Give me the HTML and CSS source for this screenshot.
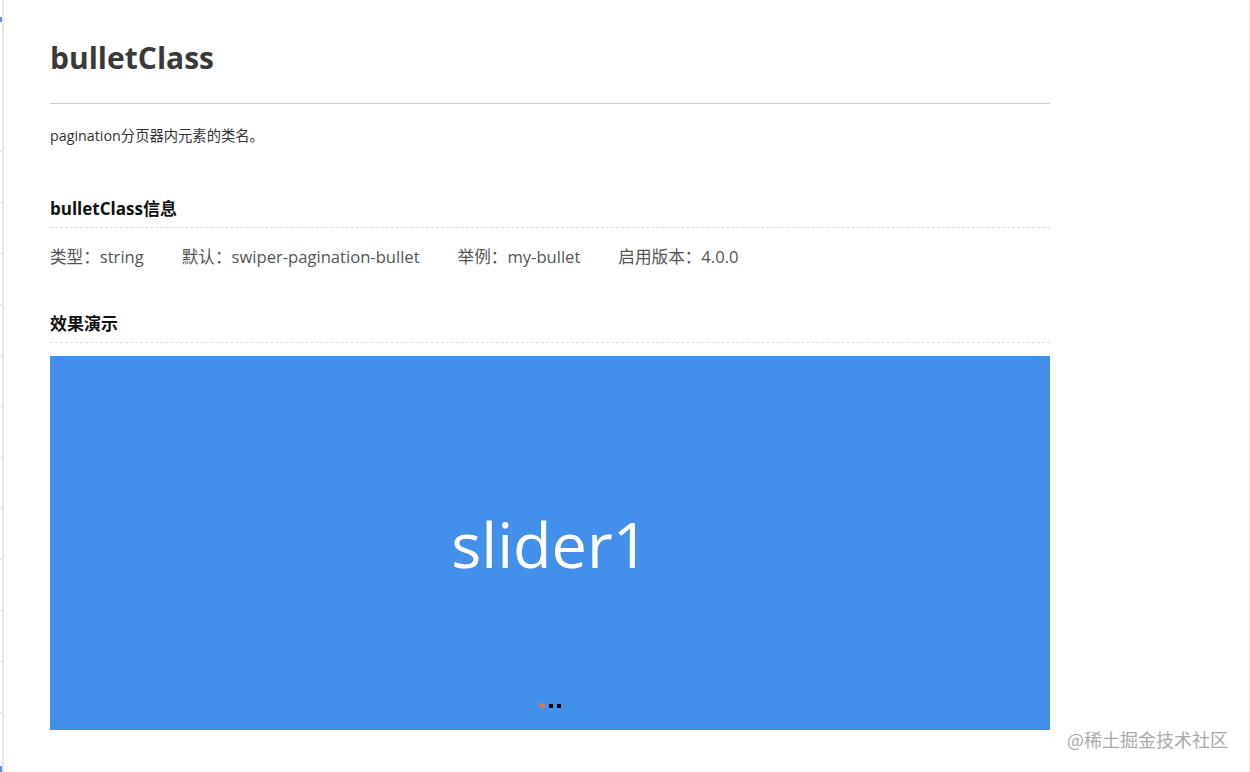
FILE: index.html
```html
<!DOCTYPE html>
<html lang="zh-CN">
<head>
  <meta charset="UTF-8">
  <title>bulletClass</title>
  <link rel="stylesheet" href="styles.css">
</head>
<body>
  <div class="page">
    <div class="sidebar">
      <span class="sidebar-active"></span>
      <ul class="sidebar-menu">
        <li></li><li></li><li></li><li></li><li></li><li></li>
        <li></li><li></li><li></li><li></li><li></li><li></li>
      </ul>
      <span class="sidebar-bottom"></span>
    </div>
    <div class="content">
      <h1>bulletClass</h1>
      <hr>
      <p class="intro">pagination分页器内元素的类名。</p>

      <h3>bulletClass信息</h3>
      <div class="info">
        <span>类型：string</span>
        <span>默认：swiper-pagination-bullet</span>
        <span>举例：my-bullet</span>
        <span>启用版本：4.0.0</span>
      </div>

      <h3>效果演示</h3>
      <div class="swiper">
        <div class="slide">slider1</div>
        <div class="pagination">
          <span class="bullet active"></span>
          <span class="bullet"></span>
          <span class="bullet"></span>
        </div>
      </div>
    </div>
  </div>
  <div class="watermark">@稀土掘金技术社区</div>
</body>
</html>
```

FILE: styles.css
```css
body {
  margin: 0;
  background: #fff;
  font-family: "Open Sans", "Noto Sans CJK SC", sans-serif;
  color: #333;
}

.page {
  display: flex;
  width: 1249px;
  height: 772px;
  border-right: solid 1px #ececec;
  overflow: hidden;
}

.sidebar {
  width: 2px;
  flex-shrink: 0;
  border-right: solid 2px #e8e8e8;
  display: flex;
  flex-direction: column;
}

.sidebar-active {
  display: block;
  height: 5px;
  margin-top: 17px;
  background: #5b8ff0;
}

.sidebar-menu {
  list-style: none;
  margin: 0;
  padding: 0;
  padding-top: 129px;
}

.sidebar-menu li {
  height: 50px;
  border-top: solid 1px #ddd;
}

.sidebar-bottom {
  display: block;
  margin-top: auto;
  height: 6px;
  background: #5b8ff0;
}

.content {
  width: 1000px;
  padding-left: 46px;
}

h1 {
  margin: 38px 0 0;
  font-size: 30px;
  line-height: 40px;
  font-weight: bold;
  color: #3a3a3a;
}

hr {
  margin: 25px 0 0;
  border: none;
  border-top: solid 1px #ccc;
}

.intro {
  margin: 21px 0 0;
  font-size: 14.3px;
  line-height: 22px;
  color: #333;
}

h3 {
  margin: 50px 0 0;
  padding-bottom: 6px;
  font-size: 17px;
  line-height: 24px;
  font-weight: bold;
  color: #111;
  border-bottom: dashed 1px #ddd;
}

.info {
  margin-top: 17px;
  display: flex;
  gap: 38px;
  font-size: 16.6px;
  line-height: 24px;
  color: #555;
}

.info + h3 {
  margin-top: 43px;
}

.swiper {
  position: relative;
  margin-top: 13px;
  height: 374px;
  background: #4290ea;
}

.slide {
  height: 100%;
  display: flex;
  align-items: center;
  justify-content: center;
  color: #fff;
  font-size: 63px;
}

.pagination {
  position: absolute;
  left: 0;
  right: 0;
  bottom: 22px;
  display: flex;
  justify-content: center;
  align-items: center;
  gap: 4px;
}

.bullet {
  display: block;
  width: 4px;
  height: 4px;
  background: #000;
}

.bullet.active {
  width: 6px;
  height: 5px;
  border-radius: 2px;
  background: #e07a3a;
}

.watermark {
  position: absolute;
  right: 22px;
  bottom: 20px;
  font-size: 18px;
  color: #aaa;
  font-family: "Noto Sans CJK SC", sans-serif;
}
```
